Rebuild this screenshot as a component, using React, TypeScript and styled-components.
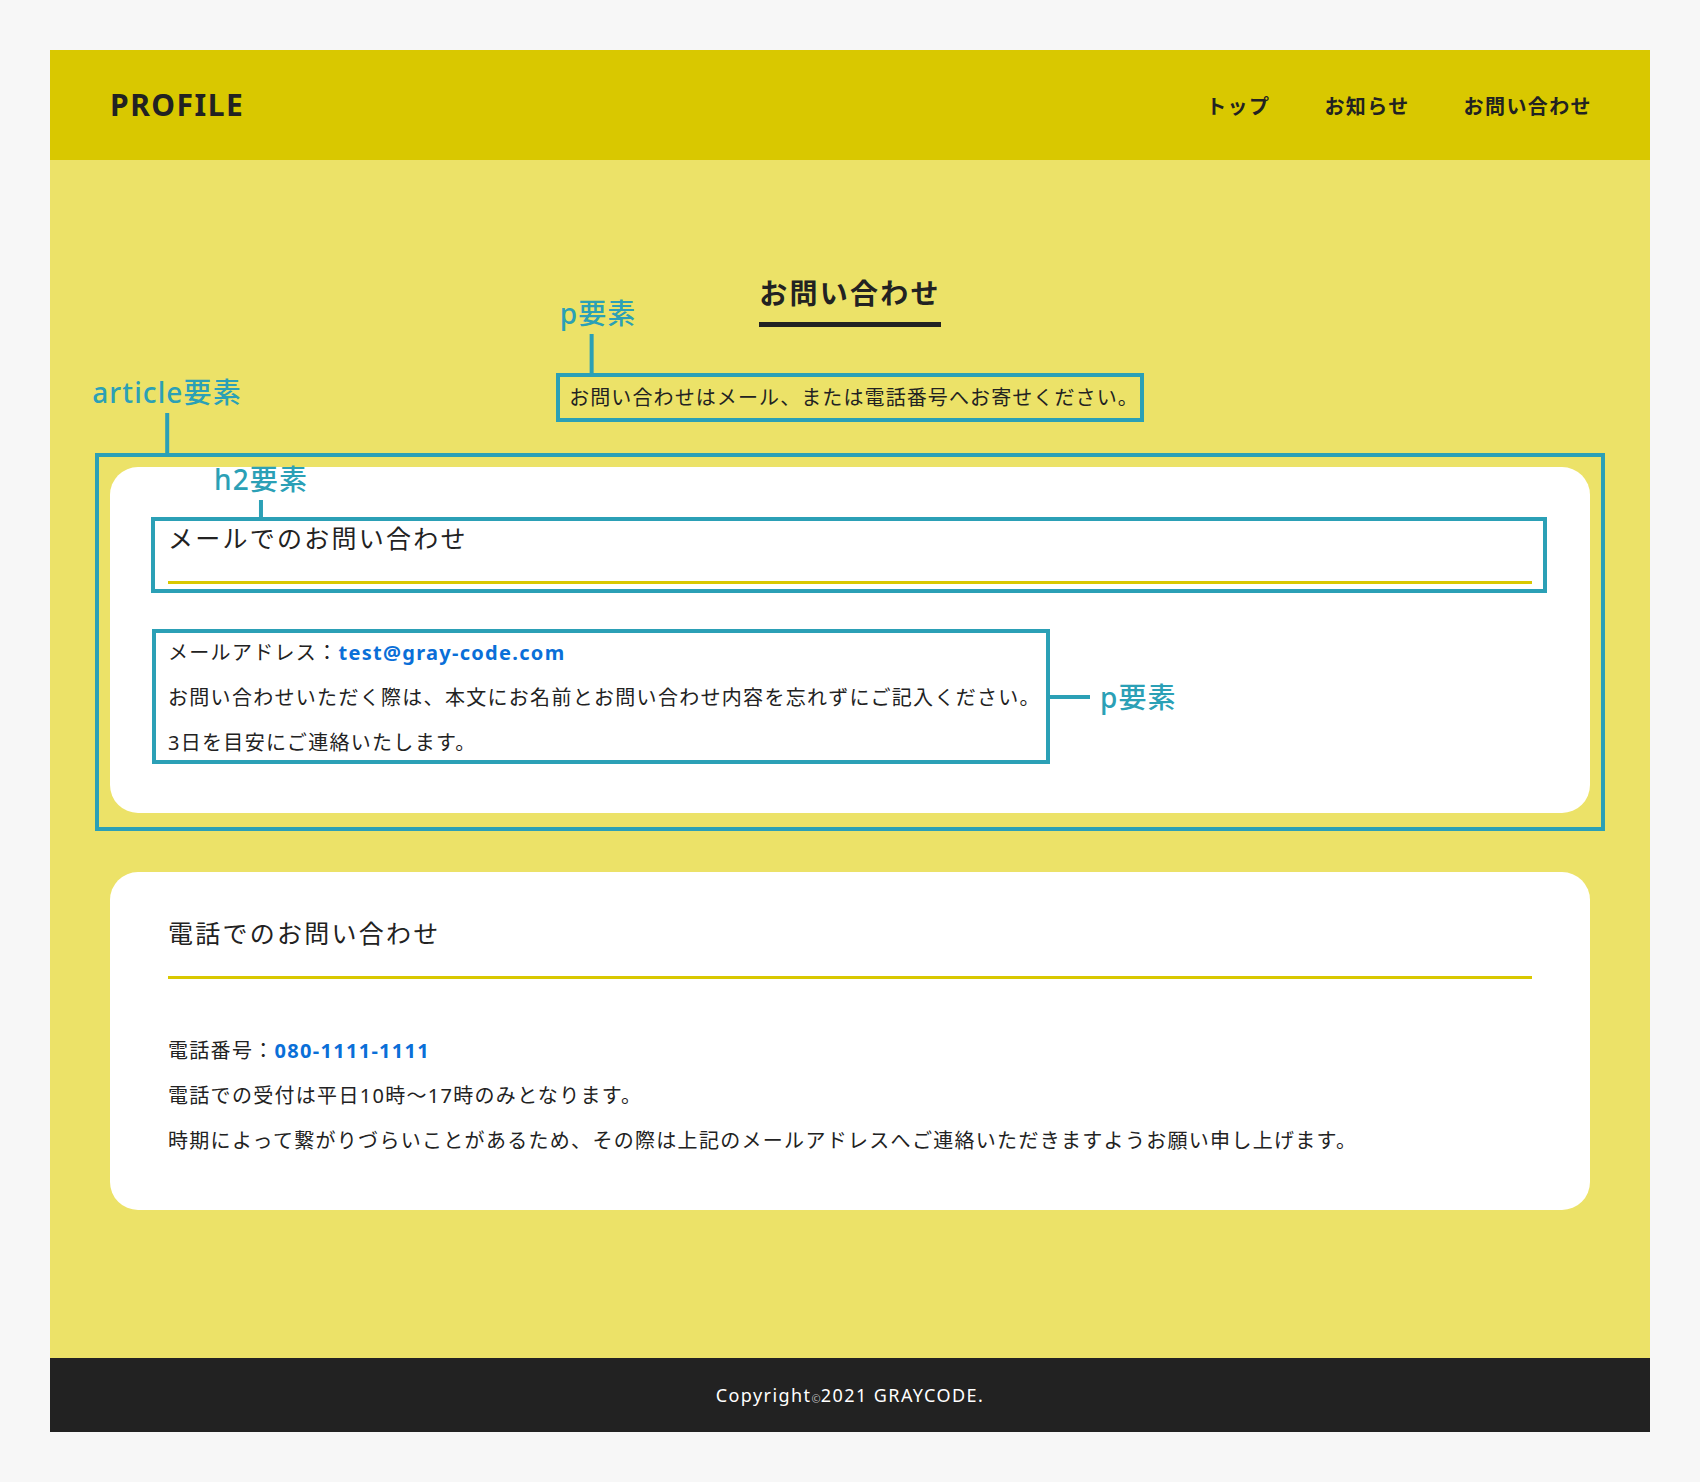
import styled, { createGlobalStyle } from "styled-components";

const GlobalStyle = createGlobalStyle`
  body {
    margin: 0;
    padding: 50px;
    background: #f7f7f7;
    font-family: "Noto Sans", "Noto Sans CJK JP", sans-serif;
    color: #222222;
  }
`;

const teal = "#2ba0b6";

const Page = styled.div`
  width: 1600px;
`;

const Header = styled.header`
  display: flex;
  justify-content: space-between;
  align-items: center;
  height: 110px;
  padding: 0 58px 0 60px;
  background: #d9c800;
`;

const Logo = styled.h1`
  margin: 0;
  font-size: 30px;
  font-weight: 700;
  letter-spacing: 0.05em;
  line-height: 1;
  color: #222222;
`;

const Nav = styled.nav`
  display: flex;
  gap: 54px;
`;

const NavLink = styled.a`
  font-size: 20px;
  font-weight: 700;
  letter-spacing: 0.07em;
  color: #222222;
  text-decoration: none;
`;

const Main = styled.main`
  display: flex;
  flex-direction: column;
  align-items: center;
  padding: 113px 60px 148px;
  background: #ece268;
`;

const PageTitle = styled.h2`
  display: inline-block;
  margin: 0;
  padding-bottom: 9px;
  border-bottom: 5px solid #222222;
  font-size: 28px;
  font-weight: 700;
  line-height: 40px;
  letter-spacing: 0.08em;
`;

/* teal annotation frames drawn round the elements */
const Frame = styled.div<{ $margin: string; $padding: string; $inline?: boolean }>`
  position: relative;
  display: ${(p) => (p.$inline ? "inline-block" : "block")};
  margin: ${(p) => p.$margin};
  padding: ${(p) => p.$padding};
  border: 4px solid ${teal};
`;

const Tag = styled.div<{ $x: number }>`
  position: absolute;
  bottom: calc(100% + 4px);
  left: ${(p) => p.$x}px;
  transform: translateX(-50%);
  display: flex;
  flex-direction: column;
  align-items: center;
  gap: 7px;
`;

const SideTag = styled.div`
  position: absolute;
  top: 50%;
  left: calc(100% + 4px);
  transform: translateY(-50%);
  display: flex;
  align-items: center;
  gap: 10px;
`;

const TagText = styled.span<{ $dx?: number }>`
  margin-left: ${(p) => p.$dx ?? 0}px;
  font-size: 28px;
  font-weight: 500;
  line-height: 1;
  letter-spacing: 0.04em;
  color: ${teal};
  white-space: nowrap;
`;

const TagLine = styled.span<{ $len: number; $across?: boolean }>`
  display: block;
  width: ${(p) => (p.$across ? `${p.$len}px` : "4px")};
  height: ${(p) => (p.$across ? "4px" : `${p.$len}px`)};
  background: ${teal};
`;

const Intro = styled.p`
  margin: 0;
  font-size: 20px;
  line-height: 37px;
  letter-spacing: 0.055em;
`;

const CardList = styled.div`
  align-self: stretch;
  display: flex;
  flex-direction: column;
  gap: 59px;
  margin-top: 45px;
`;

const Card = styled.article<{ $pt: number; $pb: number }>`
  padding: ${(p) => p.$pt}px 58px ${(p) => p.$pb}px;
  background: #ffffff;
  border-radius: 28px;
`;

const CardTitle = styled.h2<{ $shift?: number }>`
  margin: ${(p) => p.$shift ?? 0}px 0 0;
  padding-bottom: 25px;
  border-bottom: 3px solid #d9c800;
  font-size: 25px;
  font-weight: 400;
  line-height: 36px;
  letter-spacing: 0.09em;
`;

const Body = styled.p<{ $m: string }>`
  margin: ${(p) => p.$m};
  font-size: 20px;
  line-height: 45px;
  letter-spacing: 0.065em;
`;

const Link = styled.a`
  color: #0a6fd8;
  font-weight: 700;
  text-decoration: none;
`;

const Footer = styled.footer`
  display: flex;
  justify-content: center;
  align-items: center;
  height: 74px;
  background: #222222;
  color: #ffffff;
  font-size: 18px;
  letter-spacing: 0.08em;
`;

const Copy = styled.small`
  position: relative;
  top: 3px;
  font-size: 11px;
  letter-spacing: 0;
  color: #bbbbbb;
`;

function App() {
  return (
    <>
      <GlobalStyle />
      <Page>
        <Header>
          <Logo>PROFILE</Logo>
          <Nav>
            <NavLink href="#">トップ</NavLink>
            <NavLink href="#">お知らせ</NavLink>
            <NavLink href="#">お問い合わせ</NavLink>
          </Nav>
        </Header>
        <Main>
          <PageTitle>お問い合わせ</PageTitle>
          <Frame $inline $margin="46px 0 0" $padding="2px 1px 2px 9px">
            <Tag $x={31}>
              <TagText $dx={14}>p要素</TagText>
              <TagLine $len={39} />
            </Tag>
            <Intro>お問い合わせはメール、または電話番号へお寄せください。</Intro>
          </Frame>
          <CardList>
            <Frame $margin="-14px -15px -18px" $padding="10px 11px 14px">
              <Tag $x={68}>
                <TagText>article要素</TagText>
                <TagLine $len={40} />
              </Tag>
              <Card $pt={50} $pb={49}>
                <Frame $margin="0 -15px 0 -17px" $padding="0 11px 5px 13px">
                  <Tag $x={106}>
                    <TagText>h2要素</TagText>
                    <TagLine $len={17} />
                  </Tag>
                  <CardTitle $shift={-1}>メールでのお問い合わせ</CardTitle>
                </Frame>
                <Frame $inline $margin="36px 0 0 -16px" $padding="0 5px 0 12px">
                  <SideTag>
                    <TagLine $across $len={40} />
                    <TagText>p要素</TagText>
                  </SideTag>
                  <Body $m="-3px 0 -5px">
                    メールアドレス：<Link href="#">test@gray-code.com</Link>
                    <br />
                    お問い合わせいただく際は、本文にお名前とお問い合わせ内容を忘れずにご記入ください。
                    <br />
                    3日を目安にご連絡いたします。
                  </Body>
                </Frame>
              </Card>
            </Frame>
            <Card $pt={43} $pb={47}>
              <CardTitle>電話でのお問い合わせ</CardTitle>
              <Body $m="49px 0 0">
                電話番号：<Link href="#">080-1111-1111</Link>
                <br />
                電話での受付は平日10時〜17時のみとなります。
                <br />
                時期によって繋がりづらいことがあるため、その際は上記のメールアドレスへご連絡いただきますようお願い申し上げます。
              </Body>
            </Card>
          </CardList>
        </Main>
        <Footer>
          Copyright<Copy>©</Copy>2021 GRAYCODE.
        </Footer>
      </Page>
    </>
  );
}

export default App;
